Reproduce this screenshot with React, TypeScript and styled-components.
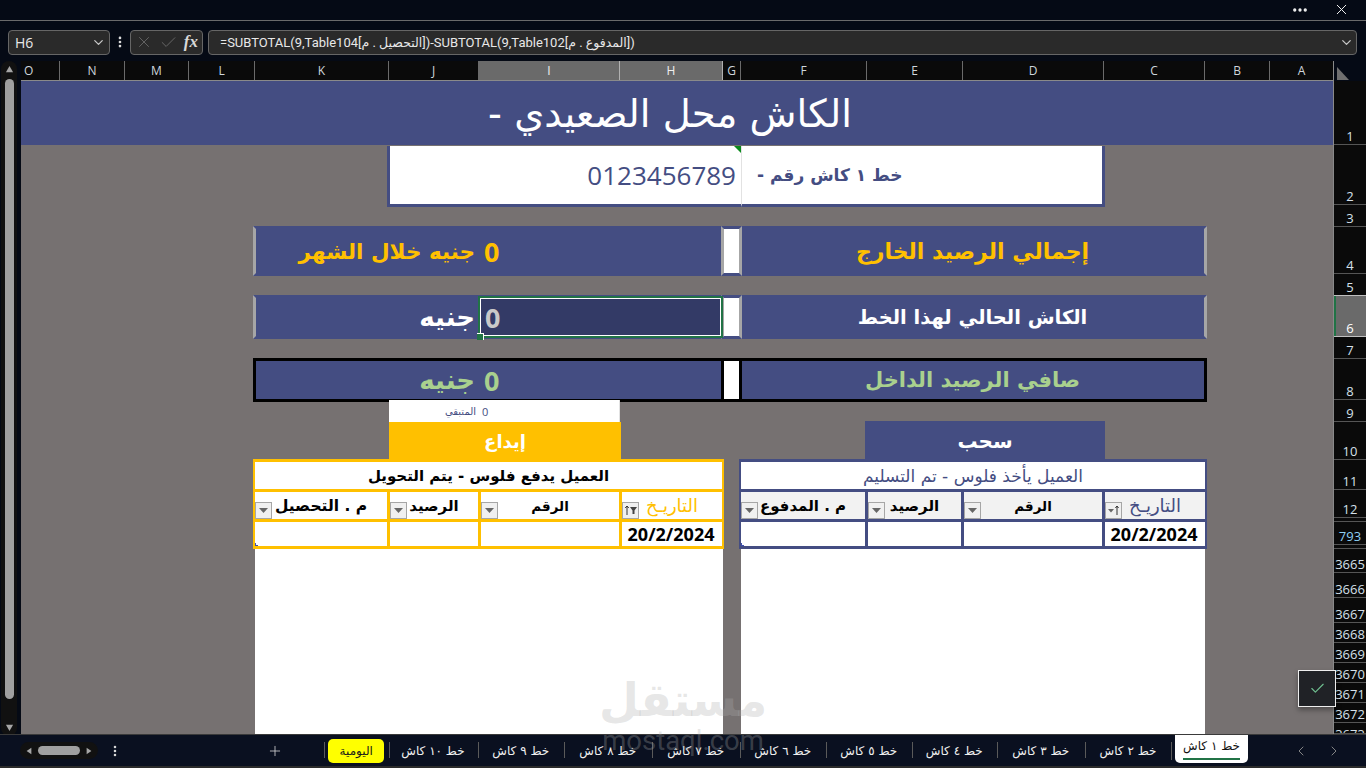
import React from "react";
import styled, { createGlobalStyle, css } from "styled-components";
import { Check, ChevronDown, ChevronLeft, ChevronRight, Ellipsis, EllipsisVertical, Plus, X } from "lucide-react";

const BLUE = "#444d82";
const AMBER = "#ffc000";
const GREEN_TEXT = "#a9d08e";
const SHEET_GREY = "#767171";
const AR = `"DejaVu Sans", "Noto Sans", sans-serif`;
const UI = `"Open Sans", "DejaVu Sans", sans-serif`;

const COLS = [63, 65, 101, 141, 96, 126, 18, 103, 141, 90, 134, 66, 64, 65, 39];
const COL_NAMES = ["A", "B", "C", "D", "E", "F", "G", "H", "I", "J", "K", "L", "M", "N", "O"];
const ROWS = [64, 60, 22, 47, 22, 41, 22, 41, 22, 38, 30, 28, 4, 23, 4, 24, 25, 25, 20, 20, 20, 20, 20, 11];
const ROW_NAMES = ["1", "2", "3", "4", "5", "6", "7", "8", "9", "10", "11", "12", "", "793", "", "3665", "3666", "3667", "3668", "3669", "3670", "3671", "3672", "3673"];
const COL_TEMPLATE = COLS.map((c) => `${c}px`).join(" ");
const ROW_TEMPLATE = ROWS.map((r) => `${r}px`).join(" ");

const TABS = [
  { label: "خط ١٠ كاش", w: 89 },
  { label: "خط ٩ كاش", w: 86.5 },
  { label: "خط ٨ كاش", w: 87.5 },
  { label: "خط ٧ كاش", w: 88.5 },
  { label: "خط ٦ كاش", w: 85.5 },
  { label: "خط ٥ كاش", w: 86.5 },
  { label: "خط ٤ كاش", w: 84.5 },
  { label: "خط ٣ كاش", w: 88.5 },
  { label: "خط ٢ كاش", w: 86 },
];

const Global = createGlobalStyle`
  html, body { margin: 0; padding: 0; background: #050a15; overflow: hidden; }
  * { box-sizing: border-box; }
`;

const Window = styled.div`
  position: relative;
  width: 1366px;
  height: 768px;
  display: flex;
  flex-direction: column;
  overflow: hidden;
  background: #050a15;
  font-family: ${UI};
`;

const TitleBar = styled.div`
  height: 21px;
  flex: none;
  display: flex;
  align-items: center;
  justify-content: flex-end;
  gap: 24px;
  padding: 0 16px 1px 0;
  color: #f2f2f2;
  border-bottom: 1px solid #6a6a6a;
`;

const FormulaRow = styled.div`
  height: 40px;
  flex: none;
  display: flex;
  align-items: center;
  padding: 2px 9px 0 8px;
`;

const Field = styled.div`
  height: 25px;
  display: flex;
  align-items: center;
  background: #2a2a2a;
  border: 1px solid #666;
  border-radius: 4px;
  color: #e8e8e8;
`;

const NameBox = styled(Field)`
  width: 102px;
  flex: none;
  justify-content: space-between;
  padding: 0 3px 0 6px;
  font-size: 14px;
`;

const Kebab = styled.div`
  width: 20px;
  flex: none;
  display: flex;
  justify-content: center;
  color: #e0e0e0;
`;

const FxBox = styled(Field)`
  width: 73px;
  flex: none;
  justify-content: space-between;
  padding: 0 4px;
  color: #6f6f6f;
`;

const FxLabel = styled.span`
  font-family: "Liberation Serif", serif;
  font-style: italic;
  font-weight: 700;
  font-size: 17px;
  color: #d8d8d8;
`;

const FormulaBox = styled(Field)`
  flex: 1;
  margin-left: 5px;
  justify-content: space-between;
  padding: 0 2px 0 11px;
  font-size: 13px;
  font-family: "Roboto", sans-serif;
  direction: ltr;
`;

const FormulaArabic = styled.bdi`
  font-family: ${AR};
  font-size: 12.5px;
`;

const Body = styled.div`
  flex: 1;
  min-height: 0;
  display: flex;
`;

const Rail = styled.div`
  width: 21px;
  flex: none;
  display: flex;
  flex-direction: column;
  align-items: center;
  padding-right: 3px;
`;

const RailTrack = styled.div`
  flex: 1;
  width: 16px;
  display: flex;
  flex-direction: column;
  align-items: center;
  background: #111;
  border-radius: 8px;
  padding: 4px 0;
  color: #a6a6a6;
`;

const RailThumb = styled.div`
  width: 9px;
  height: 620px;
  margin: 5px 0 24px;
  border-radius: 5px;
  background: #a0a0a0;
`;

const Center = styled.div`
  width: 1312px;
  flex: none;
  display: flex;
  flex-direction: column;
`;

const ColumnHeader = styled.div`
  height: 20px;
  flex: none;
  display: grid;
  direction: rtl;
  grid-template-columns: ${COL_TEMPLATE};
  background: #0a0a0a;
  border-bottom: 1px solid #8a8a8a;
`;

const ColName = styled.div<{ $active?: boolean }>`
  display: flex;
  align-items: center;
  justify-content: center;
  font-size: 12px;
  color: ${(p) => (p.$active ? "#f0f0f0" : "#cfd6dc")};
  background: ${(p) => (p.$active ? "#6a6a6a" : "transparent")};
  border-right: 1px solid ${(p) => (p.$active ? "#b0b0b0" : "#6a6a6a")};
  &:first-child { border-right: none; }
  &:last-child { justify-content: flex-end; padding-left: 3px; }
`;

const Sheet = styled.div`
  flex: 1;
  min-height: 0;
  overflow: hidden;
  display: grid;
  direction: rtl;
  grid-template-columns: ${COL_TEMPLATE};
  grid-template-rows: ${ROW_TEMPLATE};
  background: ${SHEET_GREY};
  font-family: ${AR};
`;

const Area = styled.div<{ $col: string; $row: string }>`
  grid-column: ${(p) => p.$col};
  grid-row: ${(p) => p.$row};
  min-width: 0;
  min-height: 0;
`;

const TitleBand = styled(Area)`
  display: flex;
  align-items: center;
  justify-content: center;
  padding: 0 14px 0 0;
  background: ${BLUE};
  color: #fff;
  font-size: 38.500px;
`;

const PhoneCell = styled(Area)<{ $side: "left" | "right" }>`
  position: relative;
  display: flex;
  align-items: center;
  background: #fff;
  color: ${BLUE};
  margin-top: 1px;
  border-bottom: 3px solid ${BLUE};
  margin-bottom: -2px;
  ${(p) =>
    p.$side === "left"
      ? css`
          border-left: 3px solid ${BLUE};
          margin-left: -2px;
          padding-right: 5px;
          justify-content: flex-start;
          font-family: ${UI};
          font-size: 26px;
        `
      : css`
          border-right: 3px solid ${BLUE};
          border-left: 1px solid #e2e2e2;
          margin-right: -1px;
          justify-content: flex-end;
          padding-left: 15px;
          font-size: 17px;
          font-weight: 700;
        `}
`;

const GreenTick = styled.span`
  position: absolute;
  top: 0;
  right: 0;
  width: 0;
  height: 0;
  border-top: 7px solid #0b8a1d;
  border-left: 7px solid transparent;
`;

type Tone = "amber" | "white" | "green";
const toneColor = (t: Tone) => (t === "amber" ? AMBER : t === "green" ? GREEN_TEXT : "#fff");

const StatCell = styled(Area)<{ $line: string; $tone: Tone }>`
  display: flex;
  align-items: center;
  background: ${BLUE};
  color: ${(p) => toneColor(p.$tone)};
  font-weight: 700;
  white-space: nowrap;
  border-top: 3px solid ${(p) => p.$line};
  border-bottom: 3px solid ${(p) => p.$line};
  margin-top: -1px;
  margin-bottom: -2px;
`;

const StatLabel = styled(StatCell)<{ $side: string; $size: number }>`
  justify-content: center;
  font-size: ${(p) => p.$size}px;
  border-right: 3px solid ${(p) => p.$side};
  margin-right: -2px;
`;

const StatText = styled(StatCell)<{ $side: string; $size: number }>`
  justify-content: flex-start;
  padding-right: 4px;
  font-size: ${(p) => p.$size}px;
  border-left: 3px solid ${(p) => p.$side};
  margin-left: -2px;
`;

const StatValue = styled(StatCell)`
  justify-content: flex-end;
  padding-left: 5px;
  font-family: ${UI};
  font-size: 27px;
`;

const StatGap = styled(Area)<{ $line: string; $side: string }>`
  position: relative;
  z-index: 1;
  background: #fff;
  border-top: 3px solid ${(p) => p.$line};
  border-bottom: 3px solid ${(p) => p.$line};
  border-right: 3px solid ${(p) => p.$side};
  border-left: 3px solid ${(p) => p.$side};
  margin: -1px -1px -2px -2px;
`;

const SelectedBand = styled(Area)`
  background: ${BLUE};
  border-top: 3px solid ${BLUE};
  margin: -1px 0 -2px;
`;

const SelectedCell = styled(Area)`
  position: relative;
  z-index: 2;
  display: flex;
  align-items: center;
  justify-content: flex-end;
  padding-left: 4px;
  margin: 2px 2px 1px 1px;
  background: #333a66;
  color: #c9c9c9;
  font-family: ${UI};
  font-weight: 700;
  font-size: 27px;
  border: 1px solid #fff;
  outline: 2px solid #217346;
`;

const FillHandle = styled.span`
  position: absolute;
  left: -4px;
  bottom: -5px;
  width: 7px;
  height: 7px;
  background: #217346;
  border-top: 1px solid #fff;
  border-right: 1px solid #fff;
`;

const MiniCell = styled(Area)<{ $align: "start" | "end" }>`
  display: flex;
  align-items: center;
  justify-content: ${(p) => (p.$align === "start" ? "flex-start" : "flex-end")};
  padding: 0 3px;
  background: #fff;
  color: ${BLUE};
  font-size: ${(p) => (p.$align === "start" ? 10 : 11)}px;
  ${(p) => p.$align === "end" && `border-right: 1px solid #e2e2e2; font-family: ${UI};`}
`;

const SectionTag = styled(Area)<{ $bg: string; $size: number; $outset: string }>`
  display: flex;
  align-items: center;
  justify-content: center;
  background: ${(p) => p.$bg};
  color: #fff;
  font-weight: 700;
  font-size: ${(p) => p.$size}px;
  margin: ${(p) => p.$outset};
`;

const TableBody = styled(Area)`
  background: #fff;
`;

const Table = styled(Area)<{ $color: string; $cols: string; $outset: string }>`
  position: relative;
  z-index: 1;
  display: grid;
  grid-template-columns: ${(p) => p.$cols};
  grid-template-rows: 27px 27px 1fr;
  gap: 3px;
  background: ${(p) => p.$color};
  border: solid ${(p) => p.$color};
  border-width: 3px 2px;
  margin: ${(p) => p.$outset};
`;

const TableTitle = styled.div<{ $color: string; $weight: number; $size: number }>`
  grid-column: 1 / -1;
  display: flex;
  align-items: center;
  justify-content: center;
  background: #fff;
  color: ${(p) => p.$color};
  font-size: ${(p) => p.$size}px;
  font-weight: ${(p) => p.$weight};
`;

const HeaderCell = styled.div<{ $bg: string; $color?: string; $size?: number }>`
  position: relative;
  display: flex;
  align-items: center;
  justify-content: center;
  background: ${(p) => p.$bg};
  color: ${(p) => p.$color || "#000"};
  font-size: ${(p) => p.$size || 15}px;
  font-weight: ${(p) => (p.$color ? 400 : 700)};
  white-space: nowrap;
`;

const DateHeader = styled(HeaderCell)`
  font-size: 18px;
`;

const FilterButton = styled.span`
  position: absolute;
  left: 0;
  bottom: 0;
  width: 17px;
  height: 17px;
  display: flex;
  align-items: center;
  justify-content: center;
  background: #f0f0f0;
  border: 1px solid #a6a6a6;
`;

const DataCell = styled.div`
  position: relative;
  display: flex;
  align-items: center;
  justify-content: center;
  padding-right: 2px;
  background: #fff;
  color: #000;
  font-family: ${UI};
  font-size: 18px;
  font-weight: 700;
`;

const ResizeMark = styled.span`
  position: absolute;
  left: 0;
  bottom: 0;
  width: 3px;
  height: 3px;
  border-left: 1px solid #3f4fb0;
  border-bottom: 1px solid #3f4fb0;
`;

const Gutter = styled.div`
  width: 33px;
  flex: none;
  display: flex;
  flex-direction: column;
  background: #0a0a0a;
  border-left: 1px solid #8a8a8a;
`;

const Corner = styled.div`
  height: 20px;
  flex: none;
  display: flex;
  align-items: flex-end;
  padding: 0 0 1px 3px;
  background: #050a15;
  color: #6f6f6f;
`;

const RowNames = styled.div`
  flex: 1;
  min-height: 0;
  overflow: hidden;
  display: grid;
  grid-template-rows: ${ROW_TEMPLATE};
`;

const RowName = styled.div<{ $active?: boolean; $filtered?: boolean; $clipped?: boolean }>`
  display: flex;
  align-items: ${(p) => (p.$clipped ? "flex-start" : "flex-end")};
  justify-content: center;
  padding-top: ${(p) => (p.$clipped ? 3 : 0)}px;
  font-size: 13px;
  line-height: 16px;
  overflow: hidden;
  color: ${(p) => (p.$filtered ? "#8fd0f5" : p.$active ? "#fff" : "#d5e0ea")};
  background: ${(p) => (p.$active ? "#6a6a6a" : "transparent")};
  border-bottom: 1px solid ${(p) => (p.$active ? "#c0c0c0" : "#555")};
  ${(p) => p.$active && `box-shadow: inset 2px 0 0 #217346; border-top: 1px solid #c0c0c0; margin-top: -1px;`}
`;

const BottomBar = styled.div`
  height: 34px;
  flex: none;
  display: flex;
  background: #0a1020;
  border-top: 1px solid #3a3a3a;
  border-bottom: 2px solid #2b2b2b;
  color: #e8e8e8;
  font-family: ${AR};
`;

const LeftTools = styled.div`
  width: 324px;
  flex: none;
  display: flex;
  align-items: center;
  padding-left: 20px;
`;

const HScroll = styled.div`
  width: 78px;
  height: 17px;
  flex: none;
  display: flex;
  align-items: center;
  justify-content: space-between;
  padding: 0 5px;
  background: #111;
  border-radius: 9px;
  color: #a6a6a6;
`;

const HThumb = styled.span`
  width: 42px;
  height: 9px;
  border-radius: 5px;
  background: #a0a0a0;
`;

const LeftKebab = styled.div`
  width: 34px;
  display: flex;
  justify-content: center;
  color: #d8d8d8;
`;

const AddSheet = styled.div`
  margin-left: 135px;
  display: flex;
  color: #d8d8d8;
`;

const TabList = styled.div`
  display: flex;
  align-items: center;
  flex: none;
`;

const Tab = styled.div<{ $w: number }>`
  position: relative;
  width: ${(p) => p.$w}px;
  height: 100%;
  display: flex;
  align-items: center;
  justify-content: center;
  font-size: 12px;
  color: #f0f0f0;
  white-space: nowrap;
  &::before {
    content: "";
    position: absolute;
    left: 0;
    top: 7px;
    bottom: 8px;
    width: 1px;
    background: #5a5a5a;
  }
`;

const YellowPill = styled.div`
  width: 56px;
  height: 24px;
  display: flex;
  align-items: center;
  justify-content: center;
  background: #ffff00;
  color: #1a1a1a;
  border-radius: 5px;
  font-size: 12px;
`;

const ActiveTab = styled.div`
  position: relative;
  align-self: flex-start;
  width: 73px;
  height: 28px;
  margin-left: 4px;
  display: flex;
  justify-content: center;
  padding-top: 4px;
  background: #fff;
  color: #111;
  font-size: 12px;
  border-radius: 0 0 5px 5px;
  white-space: nowrap;
  &::before {
    content: "";
    position: absolute;
    left: -4px;
    top: 7px;
    bottom: 3px;
    width: 1px;
    background: #5a5a5a;
  }
  &::after {
    content: "";
    position: absolute;
    left: 8px;
    right: 8px;
    bottom: 3px;
    height: 2px;
    background: #217346;
  }
`;

const TabNav = styled.div`
  flex: 1;
  display: flex;
  align-items: center;
  justify-content: flex-end;
  gap: 17px;
  padding-right: 24px;
  color: #8d8d8d;
`;

const CheckPopup = styled.div`
  position: absolute;
  left: 1298px;
  top: 670px;
  width: 38px;
  height: 37px;
  display: flex;
  align-items: center;
  justify-content: center;
  background: #202226;
  border: 1px solid #eee;
  color: #6fbf8f;
  box-shadow: 0 3px 5px rgba(0, 0, 0, 0.35);
  z-index: 5;
`;

const Watermark = styled.div`
  position: absolute;
  left: 590px;
  top: 664px;
  width: 186px;
  display: flex;
  flex-direction: column;
  align-items: center;
  pointer-events: none;
  z-index: 6;
  color: rgba(173, 173, 173, 0.3);
`;

const WatermarkArabic = styled.div`
  font-family: ${AR};
  font-weight: 700;
  font-size: 46px;
  line-height: 72px;
`;

const WatermarkLatin = styled.div`
  font-family: "Roboto", sans-serif;
  font-size: 27.500px;
  line-height: 22px;
  margin-top: -6px;
`;

const Triangle = ({ d, s = 9 }: { d: string; s?: number }) => (
  <svg width={s} height={s} viewBox="0 0 10 10">
    <path d={d} fill="currentColor" />
  </svg>
);

const Arrow = () => (
  <FilterButton>
    <svg width="9" height="5" viewBox="0 0 9 5">
      <path d="M0 0h9L4.5 5z" fill="#666" />
    </svg>
  </FilterButton>
);

const SortFilter = () => (
  <FilterButton>
    <svg width="14" height="11" viewBox="0 0 14 11">
      <path d="M3 1v9M1.2 3 3 1l1.8 2" stroke="#333" fill="none" />
      <path d="M6 2h7L10.5 5.5V9h-2V5.5z" fill="#444" />
    </svg>
  </FilterButton>
);

const SortOnly = () => (
  <FilterButton>
    <svg width="14" height="11" viewBox="0 0 14 11">
      <path d="M1 4h6L4 7.500z" fill="#666" />
      <path d="M10 1v9M8.400 3 10 1l1.600 2" stroke="#333" fill="none" />
    </svg>
  </FilterButton>
);

const LEFT_COLS = "100px 138px 88px 132px";
const RIGHT_COLS = "100px 138px 93px 124px";

const stats = [
  { row: "4", line: BLUE, side: "#a6a6a6", tone: "amber" as Tone, label: "إجمالي الرصيد الخارج", labelSize: 22, text: "جنيه خلال الشهر", textSize: 21.5 },
  { row: "6", line: BLUE, side: "#a6a6a6", tone: "white" as Tone, label: "الكاش الحالي لهذا الخط", labelSize: 19.5, text: "جنيه", textSize: 26, selected: true },
  { row: "8", line: "#000", side: "#000", tone: "green" as Tone, label: "صافي الرصيد الداخل", labelSize: 21, text: "جنيه", textSize: 26 },
];

export default function App() {
  return (
    <Window>
      <Global />
      <TitleBar>
        <Ellipsis size={18} strokeWidth={2.4} />
        <X size={17} strokeWidth={1.4} />
      </TitleBar>
      <FormulaRow>
        <NameBox>
          H6
          <ChevronDown size={15} color="#c8c8c8" />
        </NameBox>
        <Kebab>
          <EllipsisVertical size={14} strokeWidth={2.6} />
        </Kebab>
        <FxBox>
          <X size={18} strokeWidth={1.1} />
          <Check size={19} strokeWidth={1.1} />
          <FxLabel>fx</FxLabel>
        </FxBox>
        <FormulaBox>
          <span>
            =SUBTOTAL(9,Table104[<FormulaArabic>م</FormulaArabic> . <FormulaArabic>التحصيل</FormulaArabic>])-SUBTOTAL(9,Table102[
            <FormulaArabic>م</FormulaArabic> . <FormulaArabic>المدفوع</FormulaArabic>])
          </span>
          <ChevronDown size={15} color="#c8c8c8" />
        </FormulaBox>
      </FormulaRow>
      <Body>
        <Rail>
          <RailTrack>
            <Triangle d="M5 1l4 7H1z" />
            <RailThumb />
            <Triangle d="M1 2h8L5 9z" />
          </RailTrack>
        </Rail>
        <Center>
          <ColumnHeader>
            {COL_NAMES.map((n) => (
              <ColName key={n} $active={n === "H" || n === "I"}>
                {n}
              </ColName>
            ))}
          </ColumnHeader>
          <Sheet>
            <TitleBand $col="1 / -1" $row="1">الكاش محل الصعيدي -</TitleBand>
            <PhoneCell $side="left" $col="7 / 11" $row="2">
              0123456789
              <GreenTick />
            </PhoneCell>
            <PhoneCell $side="right" $col="4 / 7" $row="2">خط ١ كاش رقم -</PhoneCell>

            {stats.map((s) => (
              <React.Fragment key={s.row}>
                <StatLabel $col="3 / 7" $row={s.row} $line={s.line} $side={s.side} $tone={s.tone} $size={s.labelSize}>
                  {s.label}
                </StatLabel>
                <StatGap $col="7 / 8" $row={s.row} $line={s.line} $side={s.side} />
                {s.selected ? (
                  <>
                    <SelectedBand $col="8 / 10" $row={s.row} />
                    <SelectedCell $col="8 / 10" $row={s.row}>
                      0
                      <FillHandle />
                    </SelectedCell>
                  </>
                ) : (
                  <StatValue $col="8 / 10" $row={s.row} $line={s.line} $tone={s.tone}>
                    0
                  </StatValue>
                )}
                <StatText $col="10 / 12" $row={s.row} $line={s.line} $side={s.side} $tone={s.tone} $size={s.textSize}>
                  {s.text}
                </StatText>
              </React.Fragment>
            ))}

            <MiniCell $align="end" $col="9 / 10" $row="9">0</MiniCell>
            <MiniCell $align="start" $col="10 / 11" $row="9">المتبقي</MiniCell>

            <SectionTag $bg={BLUE} $size={20} $outset="-1px -1px 0 -2px" $col="4 / 6" $row="10">سحب</SectionTag>
            <SectionTag $bg={AMBER} $size={18} $outset="0 -1px 0 0" $col="9 / 11" $row="10">إيداع</SectionTag>

            <TableBody $col="3 / 7" $row="15 / -1" />
            <TableBody $col="8 / 12" $row="15 / -1" />

            <Table $col="3 / 7" $row="11 / 16" $color={BLUE} $cols={RIGHT_COLS} $outset="-1px -2px 0 -2px">
              <TableTitle $color={BLUE} $weight={400} $size={17}>العميل يأخذ فلوس - تم التسليم</TableTitle>
              <DateHeader $bg="#f2f2f2" $color={BLUE}>
                التاريـخ
                <SortOnly />
              </DateHeader>
              <HeaderCell $bg="#f2f2f2" $size={13.5}>الرقم<Arrow /></HeaderCell>
              <HeaderCell $bg="#f2f2f2">الرصيد<Arrow /></HeaderCell>
              <HeaderCell $bg="#f2f2f2">م . المدفوع<Arrow /></HeaderCell>
              <DataCell>20/2/2024</DataCell>
              <DataCell />
              <DataCell />
              <DataCell><ResizeMark /></DataCell>
            </Table>

            <Table $col="8 / 12" $row="11 / 16" $color={AMBER} $cols={LEFT_COLS} $outset="-1px -1px 0 -2px">
              <TableTitle $color="#000" $weight={700} $size={15}>العميل يدفع فلوس - يتم التحويل</TableTitle>
              <DateHeader $bg="#fff" $color={AMBER}>
                التاريـخ
                <SortFilter />
              </DateHeader>
              <HeaderCell $bg="#fff" $size={13.5}>الرقم<Arrow /></HeaderCell>
              <HeaderCell $bg="#fff">الرصيد<Arrow /></HeaderCell>
              <HeaderCell $bg="#fff" $size={15.5}>م . التحصيل<Arrow /></HeaderCell>
              <DataCell>20/2/2024</DataCell>
              <DataCell />
              <DataCell />
              <DataCell><ResizeMark /></DataCell>
            </Table>
          </Sheet>
        </Center>
        <Gutter>
          <Corner>
            <svg width="12" height="13" viewBox="0 0 12 13">
              <path d="M0 0l12 13H0z" fill="currentColor" />
            </svg>
          </Corner>
          <RowNames>
            {ROW_NAMES.map((n, i) => (
              <RowName key={i} $active={n === "6"} $filtered={n === "793"} $clipped={n === "3673"}>
                {n}
              </RowName>
            ))}
          </RowNames>
        </Gutter>
      </Body>
      <BottomBar>
        <LeftTools>
          <HScroll>
            <Triangle d="M8 1v8L2 5z" s={8} />
            <HThumb />
            <Triangle d="M2 1v8l6-4z" s={8} />
          </HScroll>
          <LeftKebab>
            <EllipsisVertical size={14} strokeWidth={2.4} />
          </LeftKebab>
          <AddSheet>
            <Plus size={16} strokeWidth={1.2} />
          </AddSheet>
        </LeftTools>
        <TabList>
          <Tab $w={64.5}>
            <YellowPill>اليومية</YellowPill>
          </Tab>
          {TABS.map((t) => (
            <Tab key={t.label} $w={t.w}>
              {t.label}
            </Tab>
          ))}
          <ActiveTab>خط ١ كاش</ActiveTab>
        </TabList>
        <TabNav>
          <ChevronLeft size={16} strokeWidth={1.4} />
          <ChevronRight size={16} strokeWidth={1.4} />
        </TabNav>
      </BottomBar>
      <CheckPopup>
        <Check size={17} strokeWidth={1.6} />
      </CheckPopup>
      <Watermark>
        <WatermarkArabic>مستقل</WatermarkArabic>
        <WatermarkLatin>mostaql.com</WatermarkLatin>
      </Watermark>
    </Window>
  );
}
